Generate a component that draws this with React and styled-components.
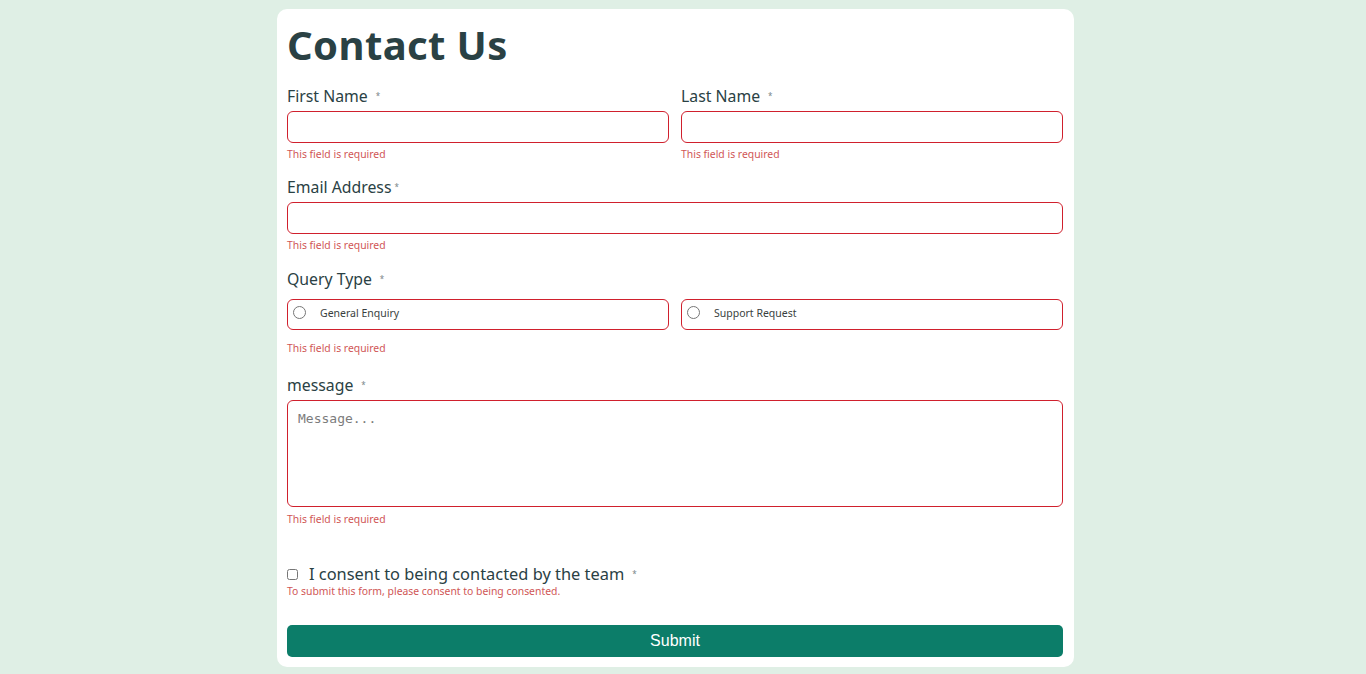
import styled, { createGlobalStyle } from 'styled-components';

const GlobalStyle = createGlobalStyle`
  html {
    background-color: #dfefe5;
  }
  body {
    margin: 8px 23px 8px 8px;
    font-family: 'Noto Sans', 'Open Sans', sans-serif;
    color: #2a4144;
  }
`;

const Card = styled.form`
  width: 797px;
  box-sizing: border-box;
  margin: 1px auto 0;
  padding: 9px 11px 10px 10px;
  background-color: white;
  border-radius: 10px;
`;

const Title = styled.h1`
  font-size: 40px;
  font-weight: 700;
  margin: 0 0 14px;
  line-height: 54px;
  letter-spacing: 0.4px;
`;

const Row = styled.div`
  display: grid;
  grid-template-columns: 1fr 1fr;
  column-gap: 12px;
`;

const Field = styled.div`
  display: flex;
  flex-direction: column;
  margin-bottom: ${(p) => p.gap || 16}px;
`;

const Label = styled.label`
  font-size: 15.8px;
  line-height: 20px;
  margin-bottom: ${(p) => p.space || 5}px;
`;

const Star = styled.span`
  font-size: 8px;
  vertical-align: top;
  color: #7a8688;
  margin-left: ${(p) => (p.tight ? 3 : 8)}px;
`;

const Input = styled.input`
  box-sizing: border-box;
  height: 32px;
  border: 1px solid #d0202d;
  border-radius: 6px;
  outline: none;
`;

const RadioBox = styled.label`
  box-sizing: border-box;
  height: 31px;
  border: 1px solid #d0202d;
  border-radius: 6px;
  display: flex;
  align-items: center;
  padding: 0 0 4px 5px;
  font-size: 10.5px;
  color: #3a3f40;

  input {
    margin: 0 14px 0 0;
  }
`;

const Error = styled.span`
  font-size: 10.4px;
  line-height: 14px;
  color: #d05656;
  margin-top: ${(p) => p.top ?? 4}px;
`;

const TextArea = styled.textarea`
  box-sizing: border-box;
  height: 107px;
  border: 1px solid #d0202d;
  border-radius: 6px;
  padding: 10px;
  font-family: 'DejaVu Sans Mono', monospace;
  font-size: 13px;
  resize: none;
  outline: none;

  &::placeholder {
    color: #7c7c7c;
  }
`;

const Consent = styled.div`
  display: flex;
  flex-direction: column;
  margin: 38px 0 27px;
`;

const ConsentLabel = styled.label`
  display: flex;
  align-items: center;
  font-size: 16.4px;
  line-height: 20px;

  input {
    width: 11px;
    height: 11px;
    margin: 0 11px 0 0;
  }
`;

const SubmitButton = styled.button`
  width: 100%;
  height: 32px;
  border: none;
  border-radius: 5px;
  background-color: #0c7d69;
  color: white;
  font-family: 'Liberation Sans', Arial, sans-serif;
  font-size: 16px;
  cursor: pointer;
`;

export default function App() {
  return (
    <>
      <GlobalStyle />
      <Card onSubmit={(e) => e.preventDefault()}>
        <Title>Contact Us</Title>
        <Row>
          <Field gap={16}>
            <Label>
              First Name<Star>*</Star>
            </Label>
            <Input type="text" />
            <Error>This field is required</Error>
          </Field>
          <Field gap={16}>
            <Label>
              Last Name<Star>*</Star>
            </Label>
            <Input type="text" />
            <Error>This field is required</Error>
          </Field>
        </Row>
        <Field gap={17}>
          <Label>
            Email Address<Star tight>*</Star>
          </Label>
          <Input type="email" />
          <Error>This field is required</Error>
        </Field>
        <Field gap={20}>
          <Label space={10}>
            Query Type<Star>*</Star>
          </Label>
          <Row>
            <RadioBox>
              <input type="radio" name="query" />
              General Enquiry
            </RadioBox>
            <RadioBox>
              <input type="radio" name="query" />
              Support Request
            </RadioBox>
          </Row>
          <Error top={11}>This field is required</Error>
        </Field>
        <Field gap={0}>
          <Label>
            message<Star>*</Star>
          </Label>
          <TextArea placeholder="Message..." />
          <Error top={5}>This field is required</Error>
        </Field>
        <Consent>
          <ConsentLabel>
            <input type="checkbox" />
            I consent to being contacted by the team<Star>*</Star>
          </ConsentLabel>
          <Error top={0}>To submit this form, please consent to being consented.</Error>
        </Consent>
        <SubmitButton type="submit">Submit</SubmitButton>
      </Card>
    </>
  );
}
